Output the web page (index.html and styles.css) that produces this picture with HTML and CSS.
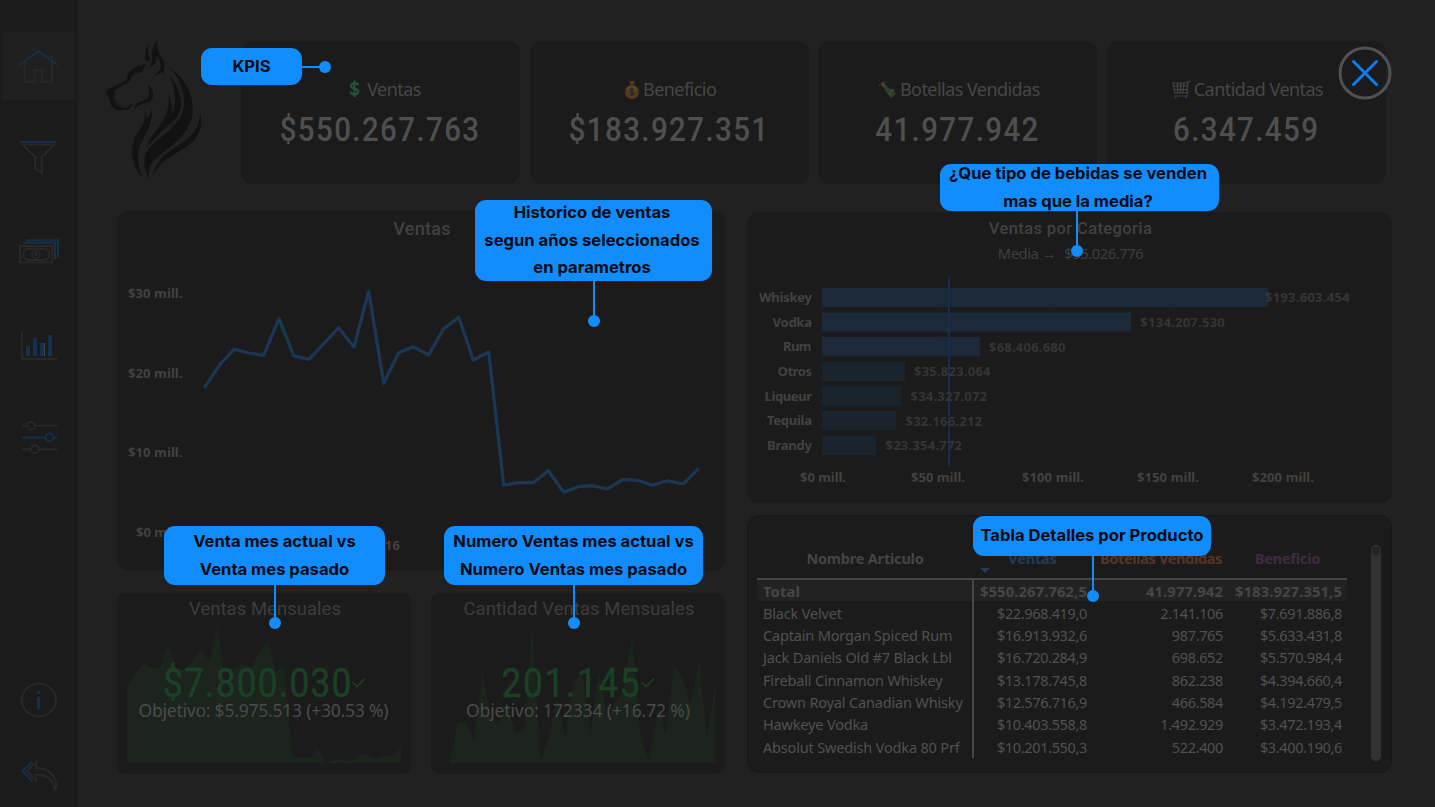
FILE: index.html
```html
<!DOCTYPE html>
<html lang="es">
<head>
<meta charset="utf-8">
<title>Ventas</title>
<link rel="stylesheet" href="styles.css">
</head>
<body>
<nav class="sidebar">
  <a class="nav-home"><svg width="72" height="68" viewBox="2 32 72 68"><path class="ig" d="M24.7 62V81.7H34.7V70.3H42V81.7H52V55"/><path class="ib" d="M18.8 65L38.2 51.2L57.6 65"/></svg></a>
  <svg class="nav-filter" width="44" height="42" viewBox="16 136 44 42"><path class="ig" d="M22.5 144.6H54.5L41.7 157V173L35.2 168.2V157Z"/><path class="ib" d="M20.3 142H56"/></svg>
  <svg class="nav-money" width="44" height="32" viewBox="16 236 44 32"><path class="ib" d="M26 240.2H58V257M23.3 242.8H55V259.8"/><path class="ig" d="M20 246H52.3V262.6H20ZM26.5 248.7H46L49 252V257L46 260H26.5L23.5 257V252Z"/><circle class="ig thin" cx="35.8" cy="254.2" r="4"/><path class="ig thin" d="M37.5 253L35 252.6L37 255.6L34.4 255.4"/></svg>
  <svg class="nav-bars" width="44" height="36" viewBox="16 328 44 36"><path class="ig" d="M22 332V359H57"/><path class="fb" d="M26 345.7h4V356h-4ZM33 338h4v18h-4ZM40 343h4v13h-4ZM48 335h4v21h-4Z"/><path class="tick" d="M44.5 343V356"/></svg>
  <svg class="nav-sliders" width="44" height="40" viewBox="16 417 44 40"><path class="ig" d="M22 425.7H27.5M35.3 425.7H57M22 449.3H31M39 449.3H57"/><circle class="ig" cx="31.3" cy="425.7" r="3.8"/><circle class="ig" cx="35" cy="449.3" r="3.8"/><path class="ib" d="M22 437.4H45.8M53.4 437.4H57"/><circle class="ib" cx="49.6" cy="437.4" r="3.8"/></svg>
  <svg class="nav-info" width="44" height="40" viewBox="16 680 44 40"><ellipse class="ig" cx="38.8" cy="700" rx="17.2" ry="16.3"/><path class="fb" d="M37 691.3h3v2.4h-3ZM37 696.7h3V709h-3Z"/></svg>
  <svg class="nav-back" width="44" height="36" viewBox="16 757 44 36"><path class="ig" d="M36.3 762.2L26.7 771.3L36.3 780.4V774.7C47 774 53 780 54.8 789.3H55.8C58 777 49 768 36.3 768Z"/><path class="ib" d="M32.3 761.7L22.3 771.3L32.3 780.7"/></svg>
</nav>

<main class="main">
  <header class="top">
    <svg class="logo" width="105" height="146" viewBox="300 110 315 438">
      <path d="M449 127C435 138 433 162 437 184L451 178C442 162 443 142 449 127Z"/>
      <path d="M474 121C460 131 455 148 456 165C459 181 453 194 446 203C462 197 472 182 470 164C479 178 485 193 481 207C477 216 470 221 461 223C473 224 481 221 486 213L489 226C498 200 493 184 484 169C473 152 468 138 474 121Z"/>
      <path d="M439 191C404 196 379 213 380 238C362 251 342 257 321 269C314 278 321 288 328 293C329 314 341 330 358 330L386 328L402 306C388 319 377 321 365 316C354 311 346 303 342 294L345 269C360 260 376 251 391 240C394 225 406 214 426 216Z"/>
      <path d="M442 253C466 266 465 297 443 306C425 312 410 315 402 332L408 312C419 300 434 305 443 293C450 283 448 267 442 253Z"/>
      <path class="cut" d="M343 305C356 318 370 323 386 321"/>
      <path d="M433 330C442 365 418 386 404 414C389 450 396 499 427 533C414 489 406 459 425 424C443 388 459 368 456 326C451 343 446 350 440 356Z"/>
      <path d="M506 284C511 330 492 363 466 393C453 409 445 423 439 443C454 424 474 406 491 387C519 355 523 318 506 284Z"/>
      <path d="M510 228C526 268 532 310 515 345C506 364 497 374 490 387C520 366 542 343 543 313C543 280 529 252 510 228Z"/>
      <path d="M504 200C548 236 560 291 548 335C536 377 482 407 453 437C428 463 426 500 448 538C440 500 456 482 482 462C530 427 573 392 579 333C580 275 549 226 504 200Z"/>
      <path d="M600 335C602 379 577 409 541 431C502 453 472 475 459 523C477 492 506 471 539 452C586 427 614 391 600 335Z"/>
    </svg>
    <section class="kpis">
      <article class="card kpi">
        <h3 class="kpi-label k1"><svg width="11" height="18" viewBox="0 0 11 18"><path class="money" d="M5.5 .5V17M9.3 5.5C9 3.5 7.5 3 5.6 3C3.5 3 2 4 2 5.8C2 9.6 9.2 7.5 9.2 11.6C9.2 13.8 7.4 14.5 5.4 14.5C3.2 14.5 1.8 13.7 1.6 11.7"/></svg>Ventas</h3>
        <p class="kpi-value">$550.267.763</p>
      </article>
      <article class="card kpi">
        <h3 class="kpi-label k2"><svg width="16" height="19" viewBox="0 0 16 19"><path fill="#56391d" d="M5 .8L7 1.5L8 .4L9.5 1.5L11.2 1L10 4.5H6Z"/><circle cx="8" cy="12" r="7" fill="#563722"/><path fill="#5a4826" d="M2 9Q8 1 14 9Q8 14 2 9Z"/><path d="M5.7 4.8H10.3" stroke="#302a24" stroke-width="1.2"/><path d="M8 7.5V16M10 9.6Q6 8 6 10.2Q6 11.6 8 11.8Q10 12.3 10 13.5Q9 15.4 6 14" fill="none" stroke="#272727" stroke-width="1.3"/></svg>Beneficio</h3>
        <p class="kpi-value">$183.927.351</p>
      </article>
      <article class="card kpi">
        <h3 class="kpi-label k3"><svg width="19" height="19" viewBox="0 0 19 19"><path fill="#26402b" d="M4 6L8 4.5Q10 8.3 13 9L18 14L13 18L9 13.5Q7.5 9 4 6Z"/><path stroke="#514630" stroke-width="3" d="M3.5 3L6.5 6"/><path stroke="#423a31" stroke-width="1" d="M1 5L2 6M6 1L6 3M1 1H2M9 1L8 3"/><path stroke="#49402b" stroke-width="3" d="M10.5 14L15.8 9.8"/></svg>Botellas Vendidas</h3>
        <p class="kpi-value">41.977.942</p>
      </article>
      <article class="card kpi">
        <h3 class="kpi-label k4"><svg width="19" height="19" viewBox="0 0 19 19"><path fill="none" stroke="#454545" stroke-width="1.2" d="M18.5 1L16 1.8L14.8 13H3L1 3H15.5M2 6H15M2.5 9.5H14.5M5 3L6 13M8.5 3V13M12 3L11 13"/><path stroke="#253449" stroke-width="1.3" fill="none" d="M17 11L15 16H3"/><circle cx="3.5" cy="17" r="1.4" fill="#293744"/><circle cx="14" cy="17" r="1.4" fill="#293744"/></svg>Cantidad Ventas</h3>
        <p class="kpi-value">6.347.459</p>
      </article>
    </section>
  </header>

  <div class="board">
    <div class="col-left">
      <article class="card sales">
        <h2 class="title">Ventas</h2>
        <svg class="plot" width="608" height="320" viewBox="117 246 608 320">
          <g class="axis">
            <text x="128" y="298" textLength="54.5">$30 mill.</text>
            <text x="128" y="378" textLength="54.5">$20 mill.</text>
            <text x="128" y="457" textLength="54.5">$10 mill.</text>
            <text x="136" y="537" textLength="46.5">$0 mill.</text>
            <text x="369" y="550" textLength="31">2016</text>
          </g>
          <polyline class="sales-line" points="205,386.7 220,364.3 234,349.3 248.5,353 263.7,355.3 279,318.7 293.7,355.7 309,359.3 324,343.5 338.7,327.7 354,347 368.7,291.3 383.7,383.3 398.7,352.7 413,346.7 428.7,355 443.3,329.3 458.7,317.3 473.3,360 488.7,352 503.7,485 518.3,482.7 533.3,482.7 548.3,470.7 563.7,492.3 578.3,486.7 592.3,485.7 607.7,489 622.7,479.3 637.3,480.3 652.3,485.3 667.3,480.7 683.3,484 697.7,469.3"/>
        </svg>
      </article>
      <div class="monthly">
        <article class="card small">
          <svg width="294" height="181" viewBox="117 593 294 181">
            <g transform="translate(110 515) scale(.33333)"><path class="area" d="M51 744V520L73 478L100 447L125 457L150 459L174 384L200 462L225 465L273 403L299 440L323 330L347 520L372 455L400 443L425 458L448 410L474 382L498 470L522 453L548 730L575 726L600 727L623 700L648 743L670 735L700 733L725 738L748 719L772 720L800 731L822 722L850 726L873 697V744Z"/></g>
            <text class="din stitle" x="189" y="615" textLength="152">Ventas Mensuales</text>
            <text class="din big" transform="translate(163 696.8) scale(.88 1)" textLength="214">$7.800.030</text>
            <path class="check" d="M353 682.5L357 686.5L365 678.5"/>
            <text class="goal" x="138.5" y="717" textLength="250">Objetivo: $5.975.513 (+30.53 %)</text>
          </svg>
        </article>
        <article class="card small">
          <svg width="294" height="181" viewBox="430.5 593 294 181">
            <g transform="translate(425 515) scale(.33333)"><path class="area" d="M72 744L97 624L120 617L146 682L170 472L197 605L220 628L245 560L270 655L296 640L320 330L345 740L370 670L395 545L420 670L445 500L470 470L495 655L520 470L545 600L570 560L590 530L620 358L645 660L670 738L700 575L720 660L745 450L770 485L795 570L820 435L845 665L870 500V744Z"/></g>
            <text class="din stitle" x="463" y="615" textLength="231">Cantidad Ventas Mensuales</text>
            <text class="din big" transform="translate(501 696.8) scale(.88 1)" textLength="157">201.145</text>
            <path class="check" d="M641.5 682.5L645.5 686.5L653.5 678.5"/>
            <text class="goal" x="465.5" y="717" textLength="224">Objetivo: 172334 (+16.72 %)</text>
          </svg>
        </article>
      </div>
    </div>

    <div class="col-right">
      <article class="card category">
        <h2 class="title t2">Ventas por Categoria</h2>
        <p class="subtitle"><span>Media →</span><span>$55.026.776</span></p>
        <svg class="plot" width="645" height="225" viewBox="747 270 645 225">
          <path class="grid" d="M822.5 279V466M938.5 279V466M1053.5 279V466M1168.5 279V466M1283.5 279V466"/>
          <path class="bar hi" d="M822 288H1268V307H822ZM822 312.6H1131V331.8H822ZM822 337H980V356.2H822Z"/>
          <path class="bar" d="M822 362H905V381H822ZM822 386.4H901.3V405.6H822ZM822 411H896.3V430H822ZM822 436H876V455H822Z"/>
          <path class="avg" d="M949 277V466.5"/>
          <g class="axis">
            <text x="759" y="302" textLength="53">Whiskey</text>
            <text x="772.5" y="327" textLength="39.5">Vodka</text>
            <text x="783" y="351" textLength="28.5">Rum</text>
            <text x="777.5" y="376" textLength="34.5">Otros</text>
            <text x="764.5" y="401" textLength="47.5">Liqueur</text>
            <text x="767" y="425" textLength="45">Tequila</text>
            <text x="767" y="450" textLength="45">Brandy</text>
            <text x="800" y="482" textLength="46">$0 mill.</text>
            <text x="911" y="482" textLength="54">$50 mill.</text>
            <text x="1022" y="482" textLength="62">$100 mill.</text>
            <text x="1137" y="482" textLength="62">$150 mill.</text>
            <text x="1252" y="482" textLength="62">$200 mill.</text>
          </g>
          <g class="axis val">
            <text x="1265" y="302" textLength="84.5">$193.603.454</text>
            <text x="1140.3" y="327" textLength="84.5">$134.207.530</text>
            <text x="989" y="352" textLength="76.5">$68.406.680</text>
            <text x="914" y="376" textLength="76.5">$35.823.064</text>
            <text x="910.5" y="401" textLength="76.5">$34.327.072</text>
            <text x="905.5" y="426" textLength="76.5">$32.166.212</text>
            <text x="885.5" y="450" textLength="76.5">$23.354.772</text>
          </g>
        </svg>
      </article>

      <article class="card detail">
        <table class="table">
          <thead><tr><th class="name">Nombre Articulo</th><th class="c-sales">Ventas<i class="sort"></i></th><th class="c-bottles">Botellas Vendidas</th><th class="c-profit">Beneficio</th></tr></thead>
          <tbody>
            <tr class="total"><td>Total</td><td>$550.267.762,5</td><td>41.977.942</td><td>$183.927.351,5</td></tr>
            <tr><td>Black Velvet</td><td>$22.968.419,0</td><td>2.141.106</td><td>$7.691.886,8</td></tr>
            <tr><td>Captain Morgan Spiced Rum</td><td>$16.913.932,6</td><td>987.765</td><td>$5.633.431,8</td></tr>
            <tr><td>Jack Daniels Old #7 Black Lbl</td><td>$16.720.284,9</td><td>698.652</td><td>$5.570.984,4</td></tr>
            <tr><td>Fireball Cinnamon Whiskey</td><td>$13.178.745,8</td><td>862.238</td><td>$4.394.660,4</td></tr>
            <tr><td>Crown Royal Canadian Whisky</td><td>$12.576.716,9</td><td>466.584</td><td>$4.192.479,5</td></tr>
            <tr><td>Hawkeye Vodka</td><td>$10.403.558,8</td><td>1.492.929</td><td>$3.472.193,4</td></tr>
            <tr><td>Absolut Swedish Vodka 80 Prf</td><td>$10.201.550,3</td><td>522.400</td><td>$3.400.190,6</td></tr>
          </tbody>
        </table>
        <div class="scroll"><span class="thumb"></span></div>
      </article>
    </div>
  </div>
</main>

<aside class="tip tip-kpis">KPIS</aside>
<aside class="tip tip-history"><span>Historico de ventas</span><span>segun años seleccionados</span><span>en parametros</span></aside>
<aside class="tip tip-average"><span>¿Que tipo de bebidas se venden</span><span>mas que la media?</span></aside>
<aside class="tip tip-month"><span>Venta mes actual vs</span><span>Venta mes pasado</span></aside>
<aside class="tip tip-count"><span>Numero Ventas mes actual vs</span><span>Numero Ventas mes pasado</span></aside>
<aside class="tip tip-table">Tabla Detalles por Producto</aside>
<svg class="close" width="54" height="54" viewBox="0 0 54 54"><circle cx="27" cy="27" r="25" /><path d="M15.5 15.5L38.5 38.5M38.5 15.5L15.5 38.5"/></svg>
</body>
</html>
```
FILE: styles.css
```css
* { box-sizing: border-box; }
body { margin: 0; width: 1435px; height: 807px; overflow: hidden; display: flex; background: #212121; color: #4b4b4b; font-family: "Noto Sans", "Open Sans", sans-serif; position: relative; }
h2, h3, p { margin: 0; font-weight: 400; }
svg { display: block; flex: none; }

.sidebar { width: 78px; height: 807px; background: #1b1b1b; display: flex; flex-direction: column; padding-top: 32px; flex: none; }
.sidebar > svg { margin-left: 16px; }
.nav-home { margin-left: 2px; width: 72px; height: 68px; background: #202020; }
.nav-filter { margin-top: 36px; }
.nav-money { margin-top: 58px; }
.nav-bars { margin-top: 60px; }
.nav-sliders { margin-top: 53px; }
.nav-info { margin-top: 223px; }
.nav-back { margin-top: 37px; }
.ig { fill: none; stroke: #282828; stroke-width: 2; }
.ib { fill: none; stroke: #15304c; stroke-width: 2; }
.fb { fill: #15304c; }
.thin { stroke-width: 1.3; }
.tick { stroke: #40464c; stroke-width: 1; }

.main { flex: 1; display: flex; flex-direction: column; gap: 27px; padding-top: 41px; }
.top { display: flex; height: 143px; }
.logo { margin: -4px 36px 0 22px; fill: #121212; }
.cut { fill: none; stroke: #212121; stroke-width: 3; }
.kpis { width: 1145px; display: grid; grid-template-columns: repeat(4, 279px); justify-content: space-between; }
.card { background: #1b1b1b; border-radius: 12px; }
.kpi { display: flex; flex-direction: column; align-items: center; padding-top: 35px; }
.kpi-label { display: flex; align-items: center; height: 26px; font-size: 18px; line-height: 26px; letter-spacing: -.55px; white-space: nowrap; color: #474747; padding-left: 2px; }
.kpi-label svg { margin-right: 3px; }
.k1 { margin-left: 7px; }
.k1 svg { margin-right: 7px; }
.money { fill: none; stroke: #26503a; stroke-width: 2.2; }
.kpi-value { font-family: Roboto, sans-serif; font-weight: 500; font-size: 33.5px; line-height: 40px; letter-spacing: 1.6px; margin-top: 8px; transform: scaleX(.88); color: #4f4f4f; white-space: nowrap; }

.board { display: flex; gap: 22px; margin-left: 39px; }
.col-left { width: 608px; display: flex; flex-direction: column; gap: 22px; }
.col-right { width: 645px; display: flex; flex-direction: column; gap: 12px; padding-top: 1px; }
.sales { height: 360px; }
.title { font-family: Roboto, sans-serif; font-weight: 500; font-size: 18px; line-height: 36px; height: 35px; text-align: center; color: #414141; letter-spacing: .3px; padding-left: 2px; }
.monthly { display: flex; justify-content: space-between; }
.small { width: 294px; height: 181px; border-radius: 9px; overflow: hidden; }
.axis { font-weight: 700; font-size: 13px; fill: #424242; }
.val { fill: #353535; }
.sales-line { fill: none; stroke: #1a3855; stroke-width: 3.2; stroke-linejoin: round; stroke-linecap: round; }
.area { fill: #1b241d; }
.din { font-family: Roboto, sans-serif; }
.stitle { font-size: 18.5px; fill: #3d3d3d; }
.big { font-size: 40px; font-weight: 400; fill: #1b4125; stroke: #1b4125; stroke-width: .5; }
.check { fill: none; stroke: #1b4125; stroke-width: 1.6; }
.goal { font-size: 17.5px; fill: #4b4b4b; }

.category { height: 291px; }
.category .t2 { font-size: 16.5px; letter-spacing: .4px; line-height: 33px; height: 32px; }
.subtitle { display: flex; justify-content: center; gap: 8px; height: 26px; line-height: 19px; font-size: 14.7px; letter-spacing: -.4px; color: #3f3f3f; padding-left: 2px; }
.grid { fill: none; stroke: #262626; stroke-width: 1; stroke-dasharray: 1 4.7; }
.bar { fill: #1a242c; }
.bar.hi { fill: #1b2938; }
.avg { stroke: #182d49; stroke-width: 2; }

.detail { height: 258px; border: 1px solid #171717; display: flex; padding: 29px 10px 10px 9px; justify-content: space-between; }
.table { align-self: flex-start; width: 590px; border-collapse: collapse; table-layout: fixed; font-size: 14.5px; letter-spacing: -.35px; color: #515151; }
.table th { height: 34px; padding: 0 0 10px; font-size: 14.5px; line-height: 20px; letter-spacing: -.2px; border-bottom: 2px solid #464646; color: #454545; white-space: nowrap; vertical-align: bottom; position: relative; }
.table th.name { width: 216px; }
.table th.c-sales { width: 119px; color: #233c58; }
.table th.c-bottles { width: 136px; color: #573427; letter-spacing: -.35px; text-align: right; padding-right: 6px; }
.table th.c-profit { width: 119px; color: #402b43; }
.sort { position: absolute; left: 7px; bottom: 5px; border: 5px solid transparent; border-top-color: #233c58; border-bottom: 0; }
.table td { height: 22px; padding: 0 5px 0 0; line-height: 20px; text-align: right; white-space: nowrap; }
.table tr:nth-child(3n+2) td { height: 23px; }
.table td:first-child { text-align: left; padding-left: 6px; border-right: 2px solid #464646; letter-spacing: -.17px; }
.table .total td { background: #222; color: #464646; font-weight: 700; font-size: 14.8px; letter-spacing: .1px; }
.scroll { width: 10px; height: 216px; border-radius: 5px; background: #323232; }
.thumb { display: block; width: 10px; height: 12px; border-radius: 5px; background: #242424; border: 1px solid #363636; }

.tip { position: absolute; display: flex; flex-direction: column; align-items: center; justify-content: center; background: #118dff; border-radius: 11px; color: #030a12; font: 700 16.6px/27.7px Inter, sans-serif; white-space: nowrap; }
.tip::before { content: ""; position: absolute; background: #118dff; width: 2px; top: 100%; left: var(--x); height: var(--len); }
.tip::after { content: ""; position: absolute; background: #118dff; width: 12px; height: 12px; border-radius: 50%; top: calc(100% + var(--len) - 6px); left: calc(var(--x) - 5px); }
.tip-kpis { left: 201px; top: 48px; width: 101px; height: 37px; }
.tip-kpis::before { width: 20px; height: 2px; top: 18px; left: 100%; }
.tip-kpis::after { top: 13px; left: 118px; }
.tip-history { left: 475px; top: 200px; width: 237px; height: 81px; padding-right: 3px; --x: 118px; --len: 40px; }
.tip-average { left: 940px; top: 164px; width: 279px; height: 47px; padding-right: 3px; --x: 136px; --len: 40px; }
.tip-month { left: 164px; top: 526px; width: 221px; height: 59px; --x: 110px; --len: 38px; }
.tip-count { left: 444px; top: 526px; width: 259px; height: 59px; --x: 129px; --len: 38px; }
.tip-table { left: 973px; top: 516px; width: 238px; height: 40px; --x: 119px; --len: 40px; }
.close { position: absolute; left: 1338px; top: 46px; fill: none; stroke-width: 3; }
.close circle { stroke: #515151; }
.close path { stroke: #0a7df2; stroke-linecap: round; }
```
